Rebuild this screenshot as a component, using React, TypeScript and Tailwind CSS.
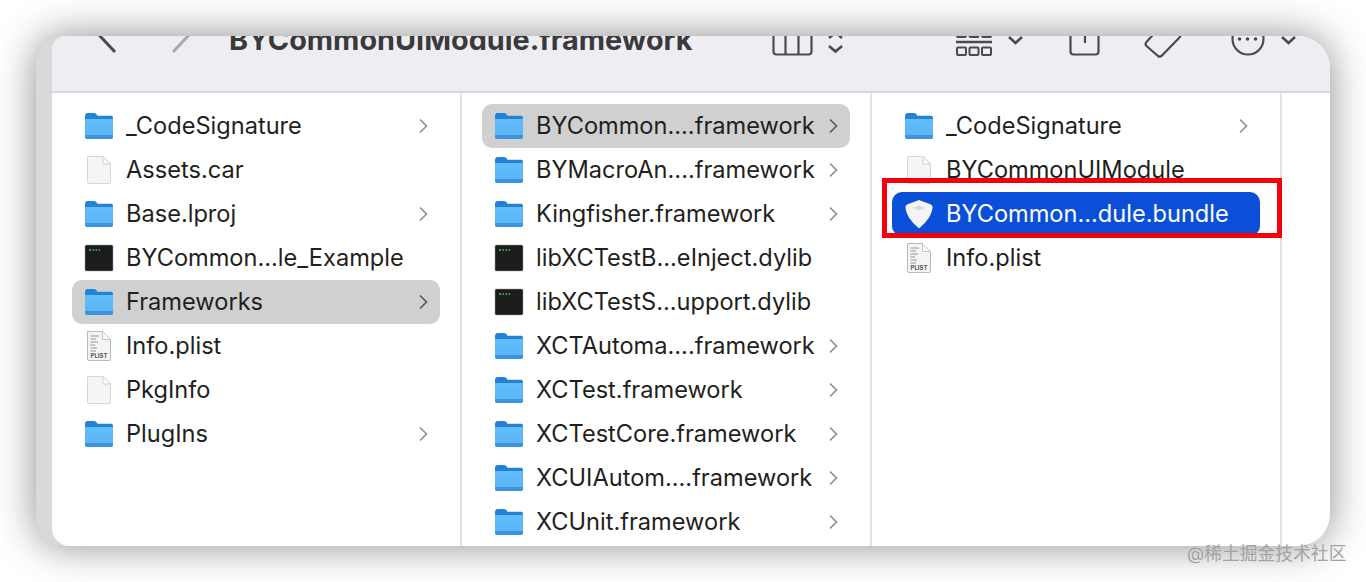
import React from 'react';

type Kind = 'folder' | 'doc' | 'exec' | 'plist' | 'bundle';
type Item = { name: string; kind: Kind; arrow?: boolean; selected?: 'gray' | 'blue' };

const FolderIcon = () => (
  <svg width="30" height="28" viewBox="0 0 30 28">
    <defs>
      <linearGradient id="fold" x1="0" y1="0" x2="0" y2="1">
        <stop offset="0" stopColor="#62bdfb" />
        <stop offset="1" stopColor="#5ab4f6" />
      </linearGradient>
    </defs>
    <path d="M1 4.5 Q1 1 3.5 1 H10 Q12 1 13 3 L13.5 3.8 H27 Q29 3.8 29 6 V12 H1 Z" fill="#2581d6" />
    <path d="M1 7 H29 V24.5 Q29 27 26.5 27 H3.5 Q1 27 1 24.5 Z" fill="url(#fold)" />
    <path d="M1 23 H29 V24.5 Q29 27 26.5 27 H3.5 Q1 27 1 24.5 Z" fill="#3b94e0" />
  </svg>
);

const DocIcon = () => (
  <svg width="30" height="30" viewBox="0 0 30 30">
    <path d="M3.5 1.5 H19 L26.5 9 V27 Q26.5 28.5 25 28.5 H5 Q3.5 28.5 3.5 27 Z" fill="#f5f5f5" stroke="#d8d8d8" />
    <path d="M19 1.5 V9 H26.5 Z" fill="#ffffff" stroke="#d0d0d0" />
  </svg>
);

const ExecIcon = () => (
  <svg width="30" height="28" viewBox="0 0 30 28">
    <rect x="1" y="1" width="28" height="26" rx="1.5" fill="#1b1c1c" stroke="#9a9a9a" strokeWidth="0.5" />
    <path d="M5 6 H7 M8.5 6 H10 M11.5 6 H13 M14.5 6 H16" stroke="#4fc55f" strokeWidth="1.6" />
  </svg>
);

const PlistIcon = () => (
  <svg width="30" height="32" viewBox="0 0 30 32">
    <path d="M3.5 1.5 H18.5 L26.5 9.5 V29 Q26.5 30.5 25 30.5 H5 Q3.5 30.5 3.5 29 Z" fill="#f4f4f4" stroke="#b9b9b9" />
    <path d="M18.5 1.5 V9.5 H26.5 Z" fill="#ffffff" stroke="#c4c4c4" />
    <path d="M6.5 6 H15 M6.5 9 H12 M6.5 12 H14 M6.5 15 H11 M6.5 18 H13 M6.5 21 H12" stroke="#b5b5b5" strokeWidth="1.4" />
    <text x="15" y="28" textAnchor="middle" fontSize="6" fontWeight="700" fill="#555" fontFamily="Inter, sans-serif">PLIST</text>
  </svg>
);

const BundleIcon = () => (
  <svg width="30" height="30" viewBox="0 0 30 30">
    <path d="M15 1 L27 5.5 Q29 6.5 28.5 9 Q27.5 19 15.5 29 Q15 29.5 14.5 29 Q2.5 19 1.5 9 Q1 6.5 3 5.5 Z" fill="#f3f4f6" />
    <path d="M9 9 L15 6.5 L21 9 L15 11.5 Z" fill="#d5d9e0" />
  </svg>
);

const icons: Record<Kind, React.ReactNode> = {
  folder: <FolderIcon />,
  doc: <DocIcon />,
  exec: <ExecIcon />,
  plist: <PlistIcon />,
  bundle: <BundleIcon />,
};

const col1: Item[] = [
  { name: '_CodeSignature', kind: 'folder', arrow: true },
  { name: 'Assets.car', kind: 'doc' },
  { name: 'Base.lproj', kind: 'folder', arrow: true },
  { name: 'BYCommon...le_Example', kind: 'exec' },
  { name: 'Frameworks', kind: 'folder', arrow: true, selected: 'gray' },
  { name: 'Info.plist', kind: 'plist' },
  { name: 'PkgInfo', kind: 'doc' },
  { name: 'PlugIns', kind: 'folder', arrow: true },
];

const col2: Item[] = [
  { name: 'BYCommon....framework', kind: 'folder', arrow: true, selected: 'gray' },
  { name: 'BYMacroAn....framework', kind: 'folder', arrow: true },
  { name: 'Kingfisher.framework', kind: 'folder', arrow: true },
  { name: 'libXCTestB...eInject.dylib', kind: 'exec' },
  { name: 'libXCTestS...upport.dylib', kind: 'exec' },
  { name: 'XCTAutoma....framework', kind: 'folder', arrow: true },
  { name: 'XCTest.framework', kind: 'folder', arrow: true },
  { name: 'XCTestCore.framework', kind: 'folder', arrow: true },
  { name: 'XCUIAutom....framework', kind: 'folder', arrow: true },
  { name: 'XCUnit.framework', kind: 'folder', arrow: true },
];

const col3: Item[] = [
  { name: '_CodeSignature', kind: 'folder', arrow: true },
  { name: 'BYCommonUIModule', kind: 'doc' },
  { name: 'BYCommon...dule.bundle', kind: 'bundle', selected: 'blue' },
  { name: 'Info.plist', kind: 'plist' },
];

const Row = ({ item }: { item: Item }) => {
  const bg =
    item.selected === 'gray'
      ? 'bg-[#d0d0d1] text-[#1f1f21]'
      : item.selected === 'blue'
        ? 'bg-[#0b4fd8] text-white'
        : 'text-[#1f1f21]';
  return (
    <div className={`flex items-center h-11 w-[368px] rounded-[10px] pl-[12px] ${bg}`}>
      <div className="w-[30px] h-[30px] flex items-center justify-center shrink-0">{icons[item.kind]}</div>
      <span className="ml-[12px] text-[23.6px] leading-none whitespace-nowrap">{item.name}</span>
      {item.arrow && (
        <svg className="ml-auto mr-[11px] shrink-0" width="12" height="18" viewBox="0 0 12 18">
          <path d="M3 2.5 L9.5 9 L3 15.5" fill="none" stroke={item.selected ? '#55555a' : '#8e8e92'} strokeWidth="1.6" />
        </svg>
      )}
    </div>
  );
};

const Column = ({ items }: { items: Item[] }) => (
  <div className="w-[410px] h-full shrink-0 border-r-2 border-[#e3e3e4] pl-[20px] pt-[11px] overflow-hidden">
    {items.map((item) => (
      <Row key={item.name} item={item} />
    ))}
  </div>
);

const Toolbar = () => (
  <div className="flex items-start h-[57px] shrink-0 overflow-hidden bg-[#eeeef2] border-b-2 border-[#d9d9dc] rounded-tl-[14px] rounded-tr-[32px]">
    <svg className="-mt-5 ml-[44px] shrink-0" width="24" height="44" viewBox="0 0 24 44">
      <path d="M19 36 L4 20 L19 4" fill="none" stroke="#4b4b4f" strokeWidth="3" />
    </svg>
    <svg className="-mt-5 ml-[48px] shrink-0" width="24" height="44" viewBox="0 0 24 44">
      <path d="M5 36 L20 20 L5 4" fill="none" stroke="#a9a9ad" strokeWidth="3" />
    </svg>
    <div className="-mt-[14px] ml-[37px] w-[464px] shrink-0 text-[28.8px] leading-[36px] font-bold text-[#3a3a3d] whitespace-nowrap">
      BYCommonUIModule.framework
    </div>
    <svg className="-mt-5 ml-[78px] shrink-0" width="75" height="44" viewBox="0 0 75 44" fill="none" stroke="#4b4b4f">
      <rect x="2.5" y="8" width="38" height="30.5" rx="3" strokeWidth="2.2" />
      <path d="M14.5 8 V38 M27.5 8 V38" strokeWidth="2.2" />
      <path d="M58 30 L64.5 35.5 L71 30 M58 22 L64.5 16.5 L71 22" strokeWidth="2.6" />
    </svg>
    <svg className="-mt-5 ml-[108px] shrink-0" width="72" height="44" viewBox="0 0 72 44" fill="none" stroke="#4b4b4f">
      <path d="M2 26 H38" strokeWidth="2.4" />
      <rect x="3" y="31.5" width="9" height="7.5" rx="1" strokeWidth="2" />
      <rect x="15.5" y="31.5" width="9" height="7.5" rx="1" strokeWidth="2" />
      <rect x="28" y="31.5" width="9" height="7.5" rx="1" strokeWidth="2" />
      <rect x="3" y="13" width="9" height="8" rx="1" strokeWidth="2" />
      <rect x="15.5" y="13" width="9" height="8" rx="1" strokeWidth="2" />
      <rect x="28" y="13" width="9" height="8" rx="1" strokeWidth="2" />
      <path d="M55 21 L61.5 27 L68 21" strokeWidth="2.6" />
    </svg>
    <svg className="-mt-5 ml-[42px] shrink-0" width="33" height="44" viewBox="0 0 33 44" fill="none" stroke="#4b4b4f">
      <rect x="2.5" y="8" width="28" height="30.5" rx="3" strokeWidth="2.2" />
      <path d="M17 12 V27" strokeWidth="2.2" />
    </svg>
    <svg className="-mt-5 ml-[42px] shrink-0" width="42" height="44" viewBox="0 0 42 44" fill="none" stroke="#4b4b4f">
      <path d="M16 12 L3.5 26 Q1.5 28 3.5 30 L15 40 Q17 41.5 19 39.5 L36 22 Q38.5 19 38.5 16 L38.5 6" strokeWidth="2.2" />
    </svg>
    <svg className="-mt-5 ml-[45px] shrink-0" width="68" height="44" viewBox="0 0 68 44" fill="none" stroke="#4b4b4f">
      <circle cx="18" cy="23" r="15.5" strokeWidth="2.2" />
      <circle cx="9.5" cy="23" r="1.8" fill="#4b4b4f" stroke="none" />
      <circle cx="17.5" cy="23" r="1.8" fill="#4b4b4f" stroke="none" />
      <circle cx="25.5" cy="23" r="1.8" fill="#4b4b4f" stroke="none" />
      <path d="M52 21 L58.5 27 L65 21" strokeWidth="2.6" />
    </svg>
  </div>
);

const App: React.FC = () => {
  return (
    <div
      className="relative w-[1366px] h-[582px] overflow-hidden bg-white pt-[36px] pl-[36px]"
      style={{ fontFamily: 'Inter, "Noto Sans CJK SC", sans-serif' }}
    >
      <div className="w-[1294px] h-[510px] rounded-l-[28px] rounded-r-[32px] bg-[#d9d9db] pl-[16px] shadow-[0_0_40px_rgba(0,0,0,0.45)]">
        <div className="flex flex-col h-full rounded-tl-[14px] rounded-bl-[18px] rounded-r-[32px] overflow-hidden bg-white">
          <Toolbar />
          <div className="flex flex-1 min-h-0">
            <Column items={col1} />
            <Column items={col2} />
            <Column items={col3} />
          </div>
        </div>
      </div>
      {/* red highlight drawn on top of the selected bundle */}
      <div className="absolute left-[882px] top-[178px] w-[400px] h-[60px] border-[5px] border-[#f40008]" />
      <div className="absolute left-[1187px] top-[543px] text-[17.8px] leading-[22px] text-[#a3a3a3] whitespace-nowrap">
        @稀土掘金技术社区
      </div>
    </div>
  );
};

export default App;
